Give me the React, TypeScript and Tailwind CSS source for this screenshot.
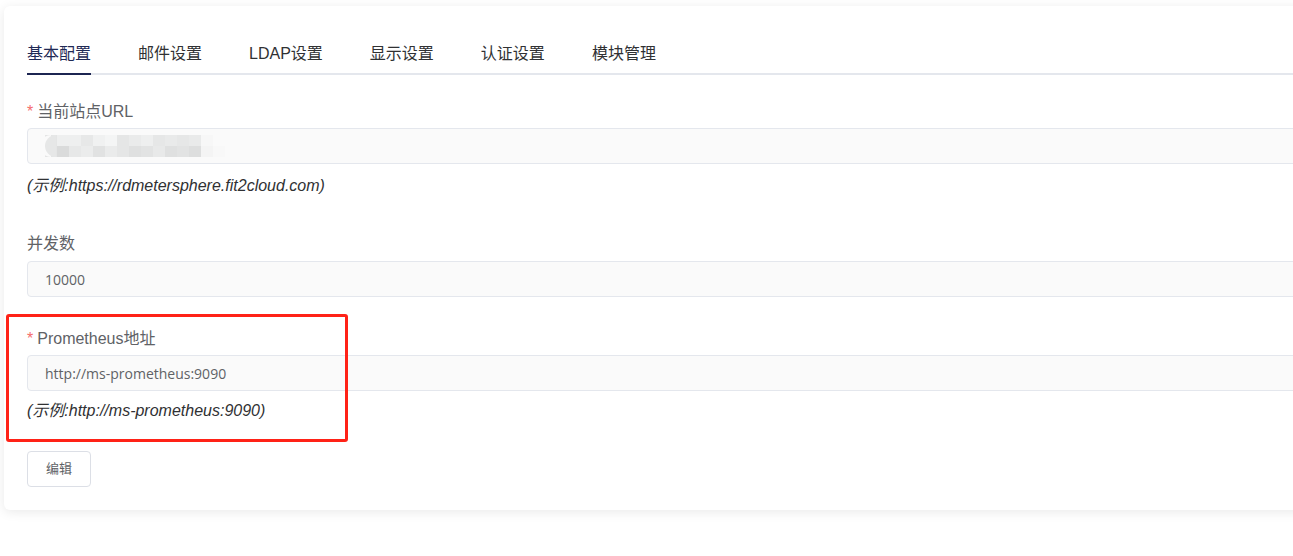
const tabs = ["基本配置", "邮件设置", "LDAP设置", "显示设置", "认证设置", "模块管理"];

const font = { fontFamily: '"Liberation Sans", "Noto Sans CJK SC", sans-serif' };

const blurCells = [
  ["#e4e5e5", "#eeefef", "#eeefef", "#e7e8e8", "#f0f1f1", "#f4f5f5", "#e5e6e6", "#eaebeb", "#eeefef", "#e6e7e7", "#e9eaea", "#e6e7e7", "#e9eaea", "#f7f7f7", "#fafafa"],
  ["#e4e5e5", "#dadbdb", "#e7e8e8", "#ebecec", "#e1e2e2", "#eaebeb", "#e5e6e6", "#dfe0e0", "#e2e3e3", "#e8e9e9", "#dfe0e0", "#e2e3e3", "#dddede", "#f4f4f4", "#f8f8f8"],
];

const Blur = () => (
  <svg width="180" height="22" viewBox="0 0 180 22">
    {blurCells.map((row, r) =>
      row.map((c, i) => (
        <rect key={`${r}-${i}`} x={i * 12} y={r * 11} width="12" height="11" fill={c} />
      ))
    )}
    <path d="M0 0 H6 V22 H6 A11 11 0 0 1 6 0 Z" fill="#fafafa" />
    <path d="M11 0 A11 11 0 0 0 11 22 Z" fill="#e6e7e7" />
  </svg>
);

const Label = ({ text, required }: { text: string; required?: boolean }) => (
  <div className="h-[20px] leading-[23px] text-[16px] text-[#606266]">
    {required && <span className="text-[#f56c6c] mr-[4px]">*</span>}
    {text}
  </div>
);

const Input = ({ children, className = "" }: { children?: React.ReactNode; className?: string }) => (
  <div
    className={`h-[36px] w-full border border-[#e4e7ed] bg-[#fafafa] rounded-[4px] flex items-center pl-[17px] text-[14px] text-[#606266] font-['Open_Sans',sans-serif] ${className}`}
  >
    {children}
  </div>
);

const Hint = ({ text, className = "" }: { text: string; className?: string }) => (
  <div className={`h-[20px] leading-[22px] text-[16px] italic text-[#303133] ${className}`}>{text}</div>
);

export default function App() {
  return (
    <div className="w-[1293px] h-[556px] overflow-hidden bg-white" style={font}>
      <div className="relative ml-[4px] mt-[6px] w-[1320px] bg-white rounded-[6px] shadow-[0_2px_12px_rgba(0,0,0,0.09)] pl-[23px] pt-[24px] pb-[23px]">
        <div className="relative flex gap-[47px] h-[45px] border-b-2 border-[#e4e7ed]">
          {tabs.map((t, i) => (
            <div
              key={t}
              className={`relative h-[43px] leading-[47px] text-[16px] ${i === 0 ? "text-[#1f2a55]" : "text-[#303133]"}`}
            >
              {t}
              {i === 0 && <div className="absolute left-0 right-0 bottom-[-2px] h-[2px] bg-[#1c2551]" />}
            </div>
          ))}
        </div>

        <div className="mt-[25px] flex flex-col">
          <Label text="当前站点URL" required />
          <Input className="mt-[8px] pl-[14px]">
            <Blur />
          </Input>
          <Hint text="(示例:https://rdmetersphere.fit2cloud.com)" className="mt-[11px]" />

          <div className="mt-[37px]">
            <Label text="并发数" />
          </div>
          <Input className="mt-[9px]">10000</Input>

          <div className="mt-[30px]">
            <Label text="Prometheus地址" required />
          </div>
          <Input className="mt-[8px]">http://ms-prometheus:9090</Input>
          <Hint text="(示例:http://ms-prometheus:9090)" className="mt-[9px]" />

          <button className="mt-[31px] w-[64px] h-[36px] border border-[#dcdfe6] rounded-[4px] bg-white text-[13px] text-[#606266]">
            编辑
          </button>
        </div>

        <div className="absolute left-[2px] top-[308px] w-[342px] h-[128px] border-[3px] border-[#ff2217] rounded-[3px]" />
      </div>
    </div>
  );
}
